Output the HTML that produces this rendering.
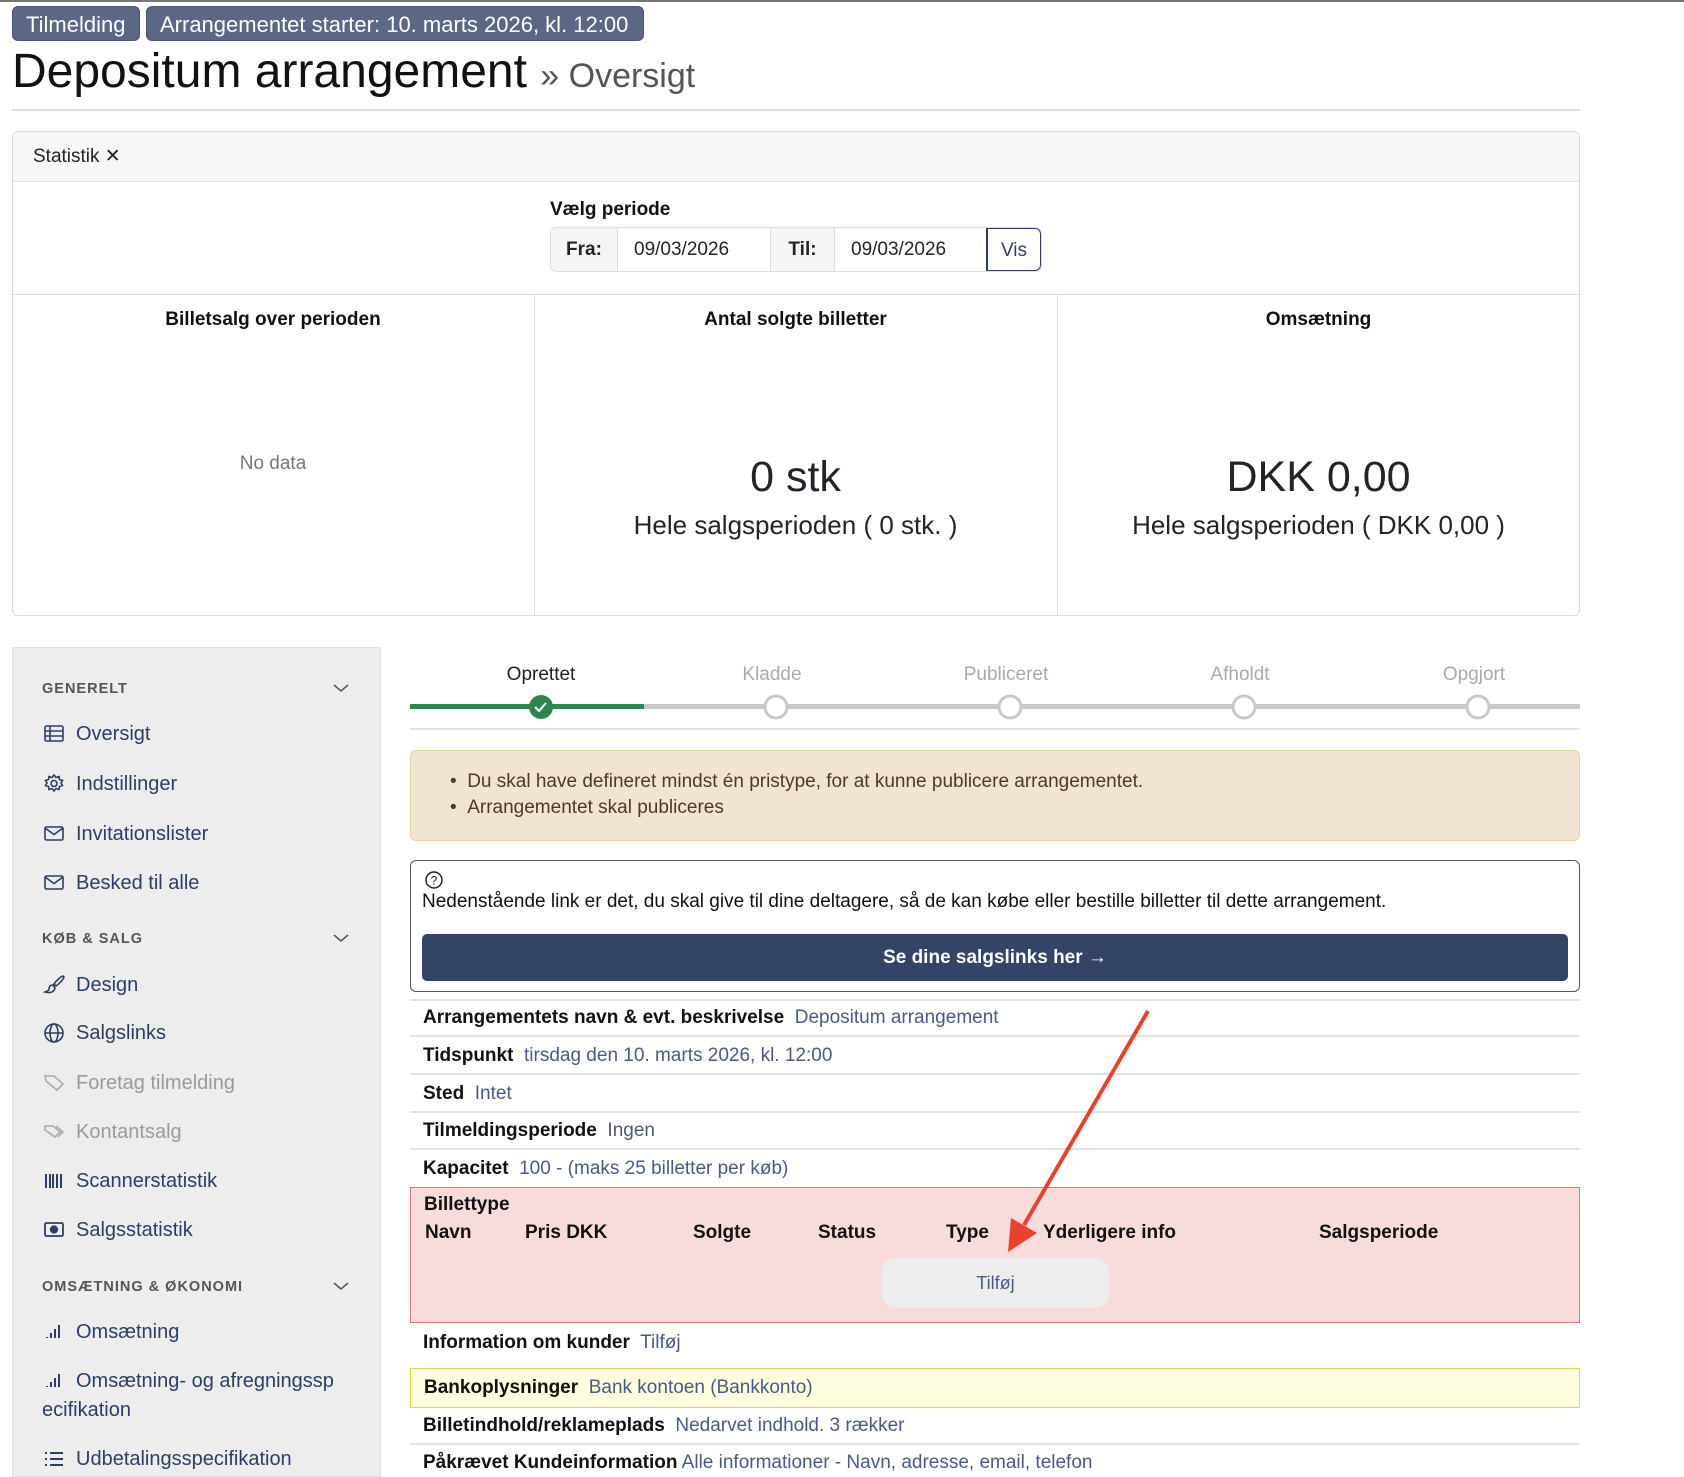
<!DOCTYPE html>
<html><head><meta charset="utf-8"><style>
*{box-sizing:border-box;margin:0;padding:0}
body{width:1684px;height:1472px;background:#fff;font-family:"Liberation Sans",sans-serif;color:#212529;position:relative;overflow:hidden}
.a{position:absolute;white-space:nowrap}
.badge{position:absolute;top:6px;height:35px;background:#5b6784;color:#fff;border-radius:6px;font-size:22px;line-height:35px;padding:0 13px;border:1px solid #4a5572}
.c{position:absolute;line-height:24px;height:24px;white-space:nowrap}
.sb{font-size:20px;color:#2c3e66}
.sb.dis{color:#9a9a9a}
.hd{font-size:14.5px;font-weight:bold;letter-spacing:1px;color:#555}
.row{position:absolute;left:410px;width:1170px;border-bottom:2px solid #e2e2e2}
.b{font-weight:bold;color:#111}
.v{color:#4a5a86}
.t{font-size:19px}
</style></head><body>
<div style="position:absolute;left:0;top:0;width:1684px;height:2px;background:#777"></div>
<div class="badge" style="left:12px;width:128px">Tilmelding</div>
<div class="badge" style="left:146px;width:498px">Arrangementet starter: 10. marts 2026, kl. 12:00</div>
<div class="a" style="left:12px;top:44px;font-size:48px;line-height:56px;color:#111">Depositum arrangement <span style="font-size:34px;color:#555">» Oversigt</span></div>
<div style="position:absolute;left:12px;top:109px;width:1568px;height:2px;background:#ddd"></div>

<div style="position:absolute;left:12px;top:131px;width:1568px;height:485px;border:1px solid #ddd;border-radius:6px;overflow:hidden">
 <div style="height:50px;background:#f7f7f7;border-bottom:1px solid #ddd;font-size:19px;line-height:50px;padding-left:20px">Statistik ✕</div>
</div>
<div class="c b" style="left:550px;top:198px;font-size:19px">Vælg periode</div>
<div style="position:absolute;left:550px;top:227px;width:492px;height:45px;border:1px solid #ddd;border-radius:6px;display:flex;font-size:19px;line-height:43px;overflow:hidden">
 <div style="width:67px;background:#f5f5f5;text-align:center;font-weight:bold;border-right:1px solid #ddd">Fra:</div>
 <div style="width:153px;padding-left:16px;border-right:1px solid #ddd">09/03/2026</div>
 <div style="width:64px;background:#f5f5f5;text-align:center;font-weight:bold;border-right:1px solid #ddd">Til:</div>
 <div style="width:152px;padding-left:16px;border-right:1px solid #2c3e66">09/03/2026</div>
 <div style="flex:1;text-align:center;color:#2c3e66;border:1px solid #2c3e66;border-radius:0 6px 6px 0">Vis</div>
</div>
<div style="position:absolute;left:12px;top:294px;width:1568px;height:1px;background:#ddd"></div>
<div style="position:absolute;left:534px;top:294px;width:1px;height:321px;background:#ddd"></div>
<div style="position:absolute;left:1057px;top:294px;width:1px;height:321px;background:#ddd"></div>
<div class="c b" style="left:12px;width:522px;text-align:center;top:308px;font-size:19px">Billetsalg over perioden</div>
<div class="c b" style="left:534px;width:523px;text-align:center;top:308px;font-size:19px">Antal solgte billetter</div>
<div class="c b" style="left:1057px;width:523px;text-align:center;top:308px;font-size:19px">Omsætning</div>
<div class="c" style="left:12px;width:522px;text-align:center;top:452px;font-size:19px;color:#777">No data</div>
<div class="a" style="left:534px;width:523px;text-align:center;top:452px;font-size:43px;line-height:50px">0 stk</div>
<div class="a" style="left:1057px;width:523px;text-align:center;top:452px;font-size:43px;line-height:50px">DKK 0,00</div>
<div class="a" style="left:534px;width:523px;text-align:center;top:510px;font-size:26px;line-height:30px">Hele salgsperioden ( 0 stk. )</div>
<div class="a" style="left:1057px;width:523px;text-align:center;top:510px;font-size:26px;line-height:30px">Hele salgsperioden ( DKK 0,00 )</div>

<!-- sidebar -->
<div style="position:absolute;left:12px;top:647px;width:369px;height:830px;background:#ededed;border:1px solid #e0e0e0"></div>
<div class="c hd" style="left:42px;top:677px">GENERELT</div>
<div class="c hd" style="left:42px;top:927px">KØB &amp; SALG</div>
<div class="c hd" style="left:42px;top:1275px">OMSÆTNING &amp; ØKONOMI</div>
<svg class="a" style="left:332px;top:682px" width="18" height="12"><path d="M2 3l7 6 7-6" fill="none" stroke="#555" stroke-width="1.5"/></svg>
<svg class="a" style="left:332px;top:932px" width="18" height="12"><path d="M2 3l7 6 7-6" fill="none" stroke="#555" stroke-width="1.5"/></svg>
<svg class="a" style="left:332px;top:1280px" width="18" height="12"><path d="M2 3l7 6 7-6" fill="none" stroke="#555" stroke-width="1.5"/></svg>

<div class="c sb" style="left:76px;top:722px">Oversigt</div>
<div class="c sb" style="left:76px;top:772px">Indstillinger</div>
<div class="c sb" style="left:76px;top:822px">Invitationslister</div>
<div class="c sb" style="left:76px;top:871px">Besked til alle</div>
<div class="c sb" style="left:76px;top:973px">Design</div>
<div class="c sb" style="left:76px;top:1021px">Salgslinks</div>
<div class="c sb dis" style="left:76px;top:1071px">Foretag tilmelding</div>
<div class="c sb dis" style="left:76px;top:1120px">Kontantsalg</div>
<div class="c sb" style="left:76px;top:1169px">Scannerstatistik</div>
<div class="c sb" style="left:76px;top:1218px">Salgsstatistik</div>
<div class="c sb" style="left:76px;top:1320px">Omsætning</div>
<div class="c sb" style="left:76px;top:1369px">Omsætning- og afregningssp</div>
<div class="c sb" style="left:42px;top:1398px">ecifikation</div>
<div class="c sb" style="left:76px;top:1447px">Udbetalingsspecifikation</div>
<svg class="a" style="left:43px;top:723px" width="24" height="745" fill="none" stroke="#2c3e66" stroke-width="1.6">
 <g><rect x="2" y="3" width="18" height="15" rx="1.5"/><path d="M2 8h18M2 13h18M7 3v15"/></g>
 <g transform="translate(0,50)"><circle cx="11" cy="10.5" r="3"/><path d="M11 2l2 2.5 3-1 .5 3 3 1-1.5 2.5 1.5 2.5-3 1-.5 3-3-1-2 2.5-2-2.5-3 1-.5-3-3-1 1.5-2.5L2.5 7.5l3-1 .5-3 3 1z"/></g>
 <g transform="translate(0,100)"><rect x="2" y="4" width="18" height="13" rx="1.5"/><path d="M2 5l9 6.5 9-6.5"/></g>
 <g transform="translate(0,149)"><rect x="2" y="4" width="18" height="13" rx="1.5"/><path d="M2 5l9 6.5 9-6.5"/></g>
 <g transform="translate(0,251)"><path d="M20 2c-3 1-7 5-9 8l2 2c3-2 7-6 8-9zM10 11c-3 0-4 2-4 4s-2 2-4 3c4 1 9 1 10-4z"/></g>
 <g transform="translate(0,299)"><circle cx="11" cy="11" r="9"/><ellipse cx="11" cy="11" rx="4" ry="9"/><path d="M2 11h18"/></g>
 <g transform="translate(0,349)" stroke="#aaa"><path d="M2 4h9l9 8-6 6-11-9z"/></g>
 <g transform="translate(0,398)" stroke="#aaa"><path d="M2 5h8l7 6-5 5-10-7zM13 5l7 6-5 5"/></g>
 <g transform="translate(0,447)" stroke-width="2"><path d="M3 4v14M7 4v14M10 4v14M14 4v14M18 4v14"/></g>
 <g transform="translate(0,496)" stroke-width="1.8"><rect x="2" y="4" width="18" height="13" rx="1.5"/><circle cx="11" cy="10.5" r="3.2" fill="#2c3e66"/></g>
 <g transform="translate(0,598)" stroke-width="2"><path d="M4 16v1M8 12v5M12 8v9M16 4v13"/></g>
 <g transform="translate(0,647)" stroke-width="2"><path d="M4 16v1M8 12v5M12 8v9M16 4v13"/></g>
 <g transform="translate(0,725)" stroke-width="2"><path d="M2 5h2M2 11h2M2 17h2M7 5h13M7 11h13M7 17h13"/></g>
</svg>

<!-- stepper -->
<div class="c t" style="left:441px;width:200px;text-align:center;top:663px;color:#222">Oprettet</div>
<div class="c t" style="left:672px;width:200px;text-align:center;top:663px;color:#aaa">Kladde</div>
<div class="c t" style="left:906px;width:200px;text-align:center;top:663px;color:#aaa">Publiceret</div>
<div class="c t" style="left:1140px;width:200px;text-align:center;top:663px;color:#aaa">Afholdt</div>
<div class="c t" style="left:1374px;width:200px;text-align:center;top:663px;color:#aaa">Opgjort</div>
<div style="position:absolute;left:410px;top:704px;width:1170px;height:5px;background:#c8c8c8"></div>
<div style="position:absolute;left:410px;top:704px;width:234px;height:5px;background:#2f8552"></div>
<svg class="a" style="left:410px;top:690px" width="1170" height="34">
 <circle cx="131" cy="17" r="12" fill="#2f8552"/><path d="M125 17l4 4 7-8" stroke="#fff" stroke-width="2" fill="none"/>
 <g fill="#fff" stroke="#c8c8c8" stroke-width="3"><circle cx="366" cy="17" r="11"/><circle cx="600" cy="17" r="11"/><circle cx="834" cy="17" r="11"/><circle cx="1068" cy="17" r="11"/></g>
</svg>
<div style="position:absolute;left:410px;top:728px;width:1170px;height:2px;background:#e2e2e2"></div>

<div style="position:absolute;left:410px;top:750px;width:1170px;height:91px;background:#f1e4d2;border:1px solid #ead1a8;border-radius:6px"></div>
<div class="c t" style="left:450px;top:770px;color:#4a3b22">•&nbsp;&nbsp;Du skal have defineret mindst én pristype, for at kunne publicere arrangementet.</div>
<div class="c t" style="left:450px;top:796px;color:#4a3b22">•&nbsp;&nbsp;Arrangementet skal publiceres</div>

<div style="position:absolute;left:410px;top:860px;width:1170px;height:132px;border:1.5px solid #555;border-radius:6px"></div>
<svg class="a" style="left:424px;top:870px" width="20" height="20"><circle cx="10" cy="10" r="8" fill="none" stroke="#222" stroke-width="1.5"/><text x="10" y="14.5" font-size="12" text-anchor="middle" font-family="Liberation Sans" fill="#222">?</text></svg>
<div class="c t" style="left:422px;top:890px;color:#111">Nedenstående link er det, du skal give til dine deltagere, så de kan købe eller bestille billetter til dette arrangement.</div>
<div style="position:absolute;left:422px;top:934px;width:1146px;height:47px;background:#344466;border-radius:5px;color:#fff;font-size:19px;font-weight:bold;line-height:47px;text-align:center">Se dine salgslinks her →</div>
<div style="position:absolute;left:410px;top:999px;width:1170px;height:2px;background:#e2e2e2"></div>

<div class="row" style="top:1001px;height:36px"></div>
<div class="row" style="top:1037px;height:38px"></div>
<div class="row" style="top:1075px;height:38px"></div>
<div class="row" style="top:1113px;height:37px"></div>
<div class="c t" style="left:423px;top:1006px"><span class="b">Arrangementets navn &amp; evt. beskrivelse</span>&nbsp; <span class="v">Depositum arrangement</span></div>
<div class="c t" style="left:423px;top:1044px"><span class="b">Tidspunkt</span>&nbsp; <span class="v">tirsdag den 10. marts 2026, kl. 12:00</span></div>
<div class="c t" style="left:423px;top:1082px"><span class="b">Sted</span>&nbsp; <span class="v">Intet</span></div>
<div class="c t" style="left:423px;top:1119px"><span class="b">Tilmeldingsperiode</span>&nbsp; <span class="v">Ingen</span></div>
<div class="c t" style="left:423px;top:1157px"><span class="b">Kapacitet</span>&nbsp; <span class="v">100 - (maks 25 billetter per køb)</span></div>

<div style="position:absolute;left:410px;top:1187px;width:1170px;height:136px;background:#f8dcdc;border:1.5px solid #d9787a"></div>
<div class="c t b" style="left:424px;top:1193px">Billettype</div>
<div class="c t b" style="left:425px;top:1221px">Navn</div>
<div class="c t b" style="left:525px;top:1221px">Pris DKK</div>
<div class="c t b" style="left:693px;top:1221px">Solgte</div>
<div class="c t b" style="left:818px;top:1221px">Status</div>
<div class="c t b" style="left:946px;top:1221px">Type</div>
<div class="c t b" style="left:1043px;top:1221px">Yderligere info</div>
<div class="c t b" style="left:1319px;top:1221px">Salgsperiode</div>
<div style="position:absolute;left:882px;top:1258px;width:227px;height:50px;background:#ededed;border-radius:14px;text-align:center;line-height:50px;font-size:18px;color:#4a5a86">Tilføj</div>

<div class="c t" style="left:423px;top:1331px"><span class="b">Information om kunder</span>&nbsp; <span class="v">Tilføj</span></div>
<div style="position:absolute;left:410px;top:1368px;width:1170px;height:40px;background:#fefde0;border:1.5px solid #f2d04a"></div>
<div class="c t" style="left:424px;top:1376px"><span class="b">Bankoplysninger</span>&nbsp; <span class="v">Bank kontoen (Bankkonto)</span></div>
<div class="row" style="top:1408px;height:37px"></div>
<div class="c t" style="left:423px;top:1414px"><span class="b">Billetindhold/reklameplads</span>&nbsp; <span class="v">Nedarvet indhold. 3 rækker</span></div>
<div class="c t" style="left:423px;top:1451px"><span class="b">Påkrævet Kundeinformation</span> <span class="v">Alle informationer - Navn, adresse, email, telefon</span></div>

<svg class="a" style="left:0;top:0;pointer-events:none" width="1684" height="1472">
 <path d="M1148 1011L1024 1225" stroke="#e8412c" stroke-width="4"/>
 <path d="M1008 1252l3-34 26 15z" fill="#e8412c"/>
</svg>
</body></html>
